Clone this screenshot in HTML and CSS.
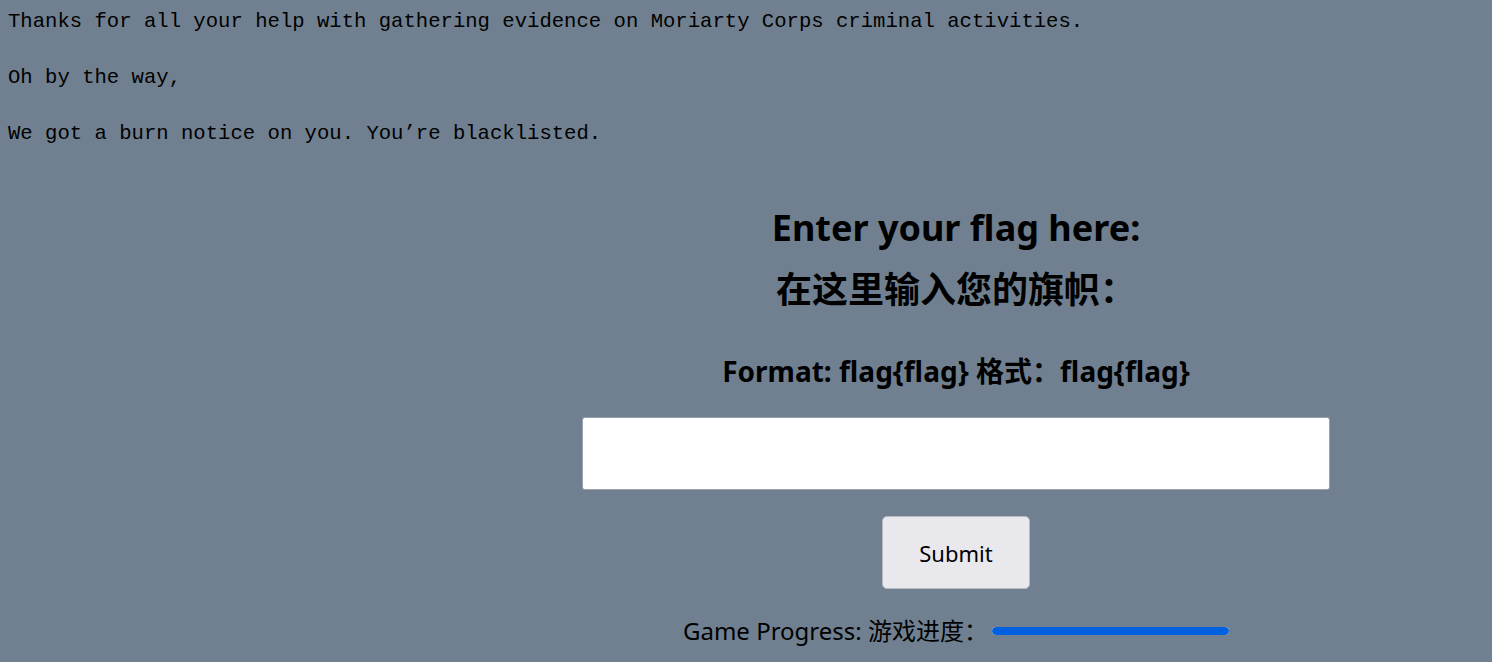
FILE: index.html
```html
<!DOCTYPE html>
<html>
<head>
<meta charset="utf-8">
<link rel="stylesheet" href="styles.css">
</head>
<body>
<div class="intro">
<p>Thanks for all your help with gathering evidence on Moriarty Corps criminal activities.</p>
<p>Oh by the way,</p>
<p>We got a burn notice on you. You’re blacklisted.</p>
</div>
<div class="layout">
<div class="spacer"></div>
<main class="panel">
<h1 class="title">Enter your flag here:<br>在这里输入您的旗帜：</h1>
<h2 class="format">Format: flag{flag} 格式：flag{flag}</h2>
<input class="flag-input" type="text">
<button class="submit">Submit</button>
<div class="progress-row">
<span class="progress-label">Game Progress: 游戏进度：</span>
<div class="progress"><div class="progress-fill" style="width:100%"></div></div>
</div>
</main>
</div>
</body>
</html>
```
FILE: styles.css
```css
html, body {
  margin: 0;
  background: #708090;
  color: #000;
}
body {
  padding: 8px 8px 0 8px;
  overflow: hidden;
}
.intro p {
  font-family: "Liberation Mono", "Noto Sans CJK SC", monospace;
  font-size: 20.6px;
  line-height: 28px;
  margin: 0 0 28px 0;
  white-space: nowrap;
}
.layout {
  display: grid;
  grid-template-columns: 420px 1fr;
  margin: 49px -8px 0 -8px;
}
.panel {
  display: flex;
  flex-direction: column;
  align-items: center;
  font-family: "Noto Sans", "Noto Sans CJK SC", sans-serif;
}
.title {
  margin: 0;
  font-size: 36px;
  line-height: 62px;
  font-weight: 700;
  text-align: center;
}
.format {
  margin: 30px 0 0 0;
  font-size: 28px;
  line-height: 40px;
  font-weight: 700;
}
.flag-input {
  margin-top: 26px;
  width: 748px;
  height: 73px;
  box-sizing: border-box;
  border: 1px solid #9aa3ad;
  border-radius: 3px;
  background: #fff;
  font-size: 20px;
}
.submit {
  margin-top: 26px;
  width: 148px;
  height: 73px;
  box-sizing: border-box;
  background: #e9e8ed;
  border: 1px solid #b9bcc4;
  border-radius: 5px;
  font-family: "Noto Sans", sans-serif;
  font-size: 22px;
  color: #000;
}
.progress-row {
  margin-top: 25px;
  display: flex;
  align-items: center;
  gap: 4px;
  height: 34px;
}
.progress-label {
  font-size: 24px;
  line-height: 34px;
  font-weight: 400;
}
.progress {
  width: 237px;
  height: 8px;
  border-radius: 4px;
  background: #e9e8ed;
  overflow: hidden;
}
.progress-fill {
  height: 100%;
  background: #0061e0;
  border-radius: 4px;
}
```
